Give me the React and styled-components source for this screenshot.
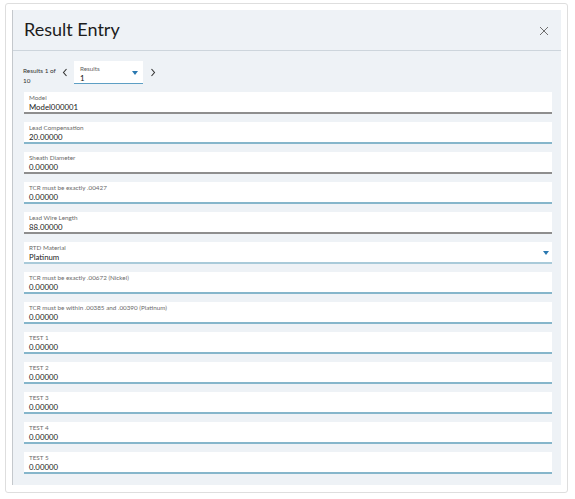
import React from 'react';
import styled, { createGlobalStyle } from 'styled-components';

const GlobalStyle = createGlobalStyle`
    * { box-sizing: border-box; }
    body {
        margin: 0;
        background: #ffffff;
        font-family: Lato, "Noto Sans", sans-serif;
        color: #222;
    }
`;

const Card = styled.div`
    margin: 3px 0 0 5px;
    width: 563px;
    height: 490px;
    border: 1px solid #dedede;
    border-radius: 3px;
    padding: 6px 6px 7px 6px;
    background: #fff;
`;

const Dialog = styled.div`
    height: 100%;
    background: #eef2f6;
    border-left: 1px solid #c4c8cc;
    display: flex;
    flex-direction: column;
`;

const Header = styled.div`
    height: 41px;
    flex: none;
    display: flex;
    align-items: center;
    justify-content: space-between;
    padding: 0 12px 2px 11px;
    border-bottom: 1px solid #cdd5dc;

    h1 {
        margin: 0;
        font-size: 18px;
        font-weight: 400;
        color: #1c1c1c;
    }
`;

const CloseButton = styled.button`
    border: 0;
    background: none;
    padding: 0;
    width: 10px;
    height: 10px;
    margin-top: 4px;
    display: flex;
    cursor: pointer;
`;

const Toolbar = styled.div`
    flex: none;
    height: 41px;
    display: flex;
    align-items: center;
    padding: 10px 0 8px 10px;
`;

const PagerText = styled.div`
    width: 38px;
    align-self: flex-end;
    margin-bottom: -2px;
    font-size: 6.4px;
    line-height: 10px;
    color: #333;
    white-space: nowrap;
`;

const Arrow = styled.button`
    border: 0;
    background: none;
    padding: 0;
    width: 6px;
    height: 9px;
    display: flex;
    margin: ${p => p.$left ? '0 6px 0 1px' : '0 0 0 7px'};
`;

const Select = styled.div`
    position: relative;
    width: 69px;
    height: 23px;
    background: #fff;
    border-bottom: 1.5px solid #5d9fc4;
    padding: 4px 6px 0 6px;

    .label {
        font-size: 6.3px;
        line-height: 8px;
        color: #666;
    }
    .value {
        font-size: 7.8px;
        line-height: 10px;
        color: #111;
    }
`;

const Caret = styled.span`
    position: absolute;
    right: ${p => p.$right || 6}px;
    top: 50%;
    margin-top: -1px;
    width: 0;
    height: 0;
    border-left: 3.5px solid transparent;
    border-right: 3.5px solid transparent;
    border-top: 4px solid #2a78b0;
`;

const Fields = styled.div`
    display: flex;
    flex-direction: column;
    gap: 8px;
    padding: 0 9px 11px 11px;
`;

const Field = styled.div`
    position: relative;
    height: 22px;
    background: #fff;
    border-bottom: 2px solid ${p => p.$tone === 'grey' ? '#8e8e8e' : p.$tone === 'light' ? '#a9cad9' : '#86b6cb'};
    padding: 2px 5px 0 5px;
`;

const Label = styled.div`
    font-size: 6.3px;
    line-height: 8px;
    color: #6a6a6a;
    white-space: nowrap;
`;

const Value = styled.div`
    font-size: 7.8px;
    line-height: 10px;
    color: #1a1a1a;
`;

const FIELDS = [
    { label: 'Model', value: 'Model000001', tone: 'grey' },
    { label: 'Lead Compensation', value: '20.00000' },
    { label: 'Sheath Diameter', value: '0.00000', tone: 'grey' },
    { label: 'TCR must be exactly .00427', value: '0.00000' },
    { label: 'Lead Wire Length', value: '88.00000', tone: 'grey' },
    { label: 'RTD Material', value: 'Platinum', tone: 'light', select: true },
    { label: 'TCR must be exactly .00672 (Nickel)', value: '0.00000' },
    { label: 'TCR must be within .00385 and .00390 (Platinum)', value: '0.00000' },
    { label: 'TEST 1', value: '0.00000' },
    { label: 'TEST 2', value: '0.00000' },
    { label: 'TEST 3', value: '0.00000' },
    { label: 'TEST 4', value: '0.00000' },
    { label: 'TEST 5', value: '0.00000' },
];

const Chevron = ({ left }) => (
    <svg width="6" height="9" viewBox="0 0 6 9">
        <path d={left ? 'M4.5 1 L1.5 4.5 L4.5 8' : 'M1.5 1 L4.5 4.5 L1.5 8'}
              fill="none" stroke="#333" strokeWidth="1.1" />
    </svg>
);

export default function App() {
    return (
        <React.Fragment>
            <GlobalStyle />
            <Card>
                <Dialog>
                    <Header>
                        <h1>Result Entry</h1>
                        <CloseButton aria-label="close">
                            <svg width="10" height="10" viewBox="0 0 10 10">
                                <path d="M1 1 L9 9 M9 1 L1 9" stroke="#6f6f6f" strokeWidth="1" />
                            </svg>
                        </CloseButton>
                    </Header>
                    <Toolbar>
                        <PagerText>Results 1 of<br />10</PagerText>
                        <Arrow $left><Chevron left /></Arrow>
                        <Select>
                            <div className="label">Results</div>
                            <div className="value">1</div>
                            <Caret $right={5} />
                        </Select>
                        <Arrow><Chevron /></Arrow>
                    </Toolbar>
                    <Fields>
                        {FIELDS.map(f => (
                            <Field key={f.label} $tone={f.tone}>
                                <Label>{f.label}</Label>
                                <Value>{f.value}</Value>
                                {f.select && <Caret $right={3} />}
                            </Field>
                        ))}
                    </Fields>
                </Dialog>
            </Card>
        </React.Fragment>
    );
}
